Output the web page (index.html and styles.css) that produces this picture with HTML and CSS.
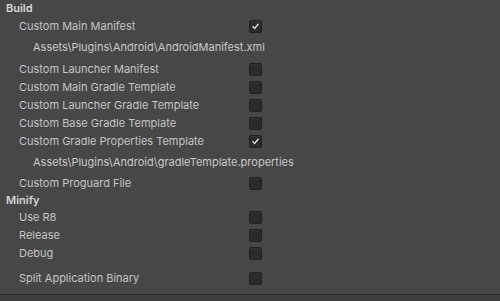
FILE: index.html
```html
<!DOCTYPE html>
<html>
<head>
<meta charset="utf-8">
<link rel="stylesheet" href="styles.css">
</head>
<body>
<div class="panel">
  <div class="header h-build">Build</div>
  <div class="row"><span class="label">Custom Main Manifest</span><span class="box checked"><svg viewBox="0 0 13 13"><path d="M3.5 6.8 L5.6 8.8 L9.6 3.8" /></svg></span></div>
  <div class="path p1">Assets\Plugins\Android\AndroidManifest.xml</div>
  <div class="row"><span class="label">Custom Launcher Manifest</span><span class="box"></span></div>
  <div class="row"><span class="label">Custom Main Gradle Template</span><span class="box"></span></div>
  <div class="row"><span class="label">Custom Launcher Gradle Template</span><span class="box"></span></div>
  <div class="row"><span class="label">Custom Base Gradle Template</span><span class="box"></span></div>
  <div class="row"><span class="label">Custom Gradle Properties Template</span><span class="box checked"><svg viewBox="0 0 13 13"><path d="M3.5 6.8 L5.6 8.8 L9.6 3.8" /></svg></span></div>
  <div class="path p2">Assets\Plugins\Android\gradleTemplate.properties</div>
  <div class="row"><span class="label">Custom Proguard File</span><span class="box"></span></div>
  <div class="header h-minify">Minify</div>
  <div class="row"><span class="label">Use R8</span><span class="box"></span></div>
  <div class="row"><span class="label">Release</span><span class="box"></span></div>
  <div class="row"><span class="label">Debug</span><span class="box"></span></div>
  <div class="row split"><span class="label">Split Application Binary</span><span class="box"></span></div>
</div>
<div class="footer"></div>
</body>
</html>
```
FILE: styles.css
```css
html, body {
  margin: 0;
  padding: 0;
  background: #474747;
  width: 500px;
  height: 301px;
  overflow: hidden;
}
body {
  font-family: Inter, "Noto Sans", sans-serif;
  font-size: 11px;
  color: #c4c4c4;
}
.panel {
  height: 294px;
}
.header {
  padding-left: 6px;
  font-weight: 600;
  color: #d6d6d6;
}
.h-build {
  height: 17px;
  line-height: 17px;
}
.h-minify {
  height: 16px;
  line-height: 16px;
}
.row {
  display: flex;
  align-items: center;
  height: 18px;
  padding-left: 19px;
}
.label {
  width: 230px;
  white-space: nowrap;
}
.box {
  box-sizing: border-box;
  width: 13px;
  height: 13px;
  border-radius: 2px;
  background: #2a2a2a;
  border: 1px solid #212121;
  box-shadow: inset 0 1px 0 #333;
  display: flex;
}
.box svg {
  width: 11px;
  height: 11px;
}
.box path {
  fill: none;
  stroke: #e4e4e4;
  stroke-width: 1.6;
  stroke-linecap: round;
  stroke-linejoin: round;
}
.path {
  padding-left: 33px;
  white-space: nowrap;
  color: #c8c8c8;
}
.p1 {
  height: 25px;
  line-height: 24px;
}
.p2 {
  height: 24px;
  line-height: 24px;
}
.split {
  margin-top: 7px;
}
.footer {
  height: 7px;
  background: #3f3f3f;
  border-top: 1px solid #2c2c2c;
}
```
